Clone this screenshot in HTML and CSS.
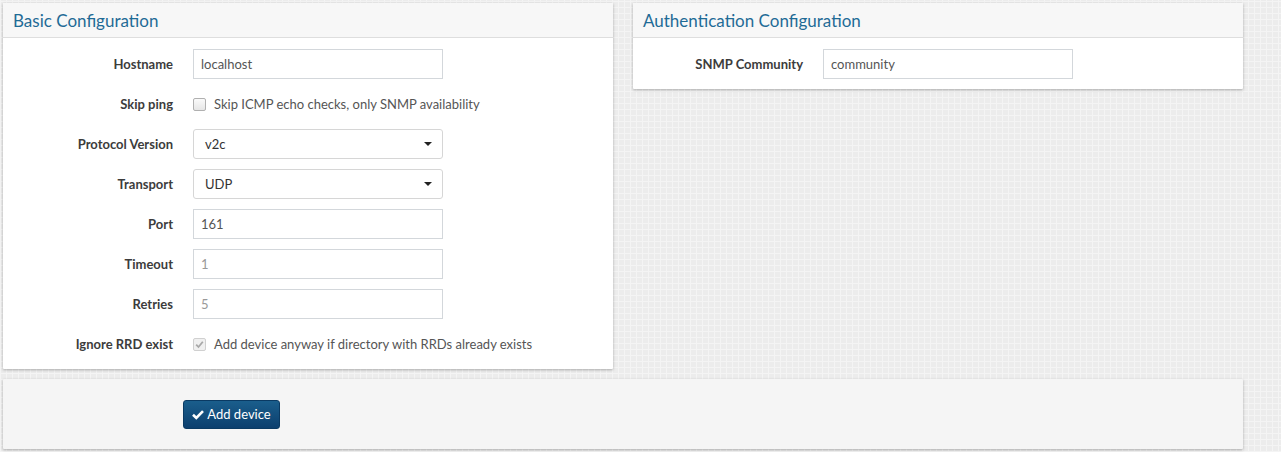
FILE: index.html
```html
<!DOCTYPE html>
<html>
<head>
<meta charset="utf-8">
<link rel="stylesheet" href="styles.css">
</head>
<body>
<div class="page">
  <div class="cols">
    <section class="panel panel-basic">
      <div class="panel-heading"><h3>Basic Configuration</h3></div>
      <div class="panel-body">
        <div class="row">
          <label class="lbl">Hostname</label>
          <div class="ctl"><input class="input" type="text" value="localhost"></div>
        </div>
        <div class="row row-check">
          <label class="lbl">Skip ping</label>
          <div class="ctl check"><span class="cb"></span><span class="cb-text">Skip ICMP echo checks, only SNMP availability</span></div>
        </div>
        <div class="row">
          <label class="lbl">Protocol Version</label>
          <div class="ctl"><div class="select"><span>v2c</span><span class="caret"></span></div></div>
        </div>
        <div class="row">
          <label class="lbl">Transport</label>
          <div class="ctl"><div class="select"><span>UDP</span><span class="caret"></span></div></div>
        </div>
        <div class="row">
          <label class="lbl">Port</label>
          <div class="ctl"><input class="input" type="text" value="161"></div>
        </div>
        <div class="row">
          <label class="lbl">Timeout</label>
          <div class="ctl"><input class="input" type="text" placeholder="1"></div>
        </div>
        <div class="row">
          <label class="lbl">Retries</label>
          <div class="ctl"><input class="input" type="text" placeholder="5"></div>
        </div>
        <div class="row row-check last">
          <label class="lbl">Ignore RRD exist</label>
          <div class="ctl check"><span class="cb cb-checked"><svg width="9" height="9" viewBox="0 0 9 9"><path d="M1.2 4.6 L3.5 7 L7.8 1.8" fill="none" stroke="#a8a8a8" stroke-width="1.8"/></svg></span><span class="cb-text">Add device anyway if directory with RRDs already exists</span></div>
        </div>
      </div>
    </section>
    <section class="panel panel-auth">
      <div class="panel-heading"><h3>Authentication Configuration</h3></div>
      <div class="panel-body">
        <div class="row last">
          <label class="lbl">SNMP Community</label>
          <div class="ctl"><input class="input" type="text" value="community"></div>
        </div>
      </div>
    </section>
  </div>
  <section class="panel panel-foot">
    <button class="btn" type="button"><svg width="12" height="11" viewBox="0 0 12 11"><path d="M1 5.8 L4.3 9 L11 2.2" fill="none" stroke="#fff" stroke-width="2.6"/></svg>Add device</button>
  </section>
</div>
</body>
</html>
```

FILE: styles.css
```css
html, body {
  margin: 0;
  padding: 0;
}
body {
  font-family: "Source Sans Pro", Lato, "Liberation Sans", sans-serif;
  font-size: 14px;
  color: #333;
  background-color: #ececec;
  background-image:
    repeating-linear-gradient(0deg, #f4f4f4 0, #f4f4f4 1px, transparent 1px, transparent 6px),
    repeating-linear-gradient(90deg, #f4f4f4 0, #f4f4f4 1px, transparent 1px, transparent 6px);
  height: 452px;
  overflow: hidden;
}
.page {
  padding: 3px 38px 0 3px;
}
.cols {
  display: flex;
  gap: 20px;
  align-items: flex-start;
}
.panel {
  background: #fff;
  box-shadow: 0 1px 3px rgba(0,0,0,0.28);
  border-radius: 1px;
}
.panel-basic, .panel-auth {
  width: 610px;
}
.panel-heading {
  background: #f7f7f7;
  border-bottom: 1px solid #dedede;
  height: 35px;
  box-sizing: border-box;
  padding: 0 10px;
  display: flex;
  align-items: center;
}
.panel-heading h3 {
  margin: 0;
  font-size: 17px;
  font-weight: 400;
  color: #1f6b96;
  line-height: 1;
}
.panel-body {
  padding: 11px 0 10px 0;
}
.row {
  display: flex;
  align-items: center;
  height: 30px;
  margin-bottom: 10px;
}
.row.last {
  margin-bottom: 0;
}
.lbl {
  width: 170px;
  text-align: right;
  font-weight: 700;
  font-size: 13px;
  color: #3c3c3c;
  box-sizing: border-box;
}
.ctl {
  margin-left: 20px;
}
.input, .select {
  width: 250px;
  height: 30px;
  box-sizing: border-box;
  border: 1px solid #d3d7db;
  border-radius: 0;
  padding: 0 7px;
  font-family: inherit;
  font-size: 13px;
  color: #555;
  background: #fff;
  outline: none;
}
.input::placeholder {
  color: #999;
}
.select {
  display: flex;
  align-items: center;
  justify-content: space-between;
  border-radius: 3px;
  border-color: #d6d6d6;
  padding: 0 10px 0 11px;
  color: #333;
}
.caret {
  width: 0;
  height: 0;
  border-left: 4px solid transparent;
  border-right: 4px solid transparent;
  border-top: 4px solid #222;
}
.check {
  display: flex;
  align-items: center;
}
.cb {
  width: 11px;
  height: 11px;
  border: 1px solid #b0b0b0;
  border-radius: 2px;
  background: linear-gradient(#fafafa, #e6e6e6);
  display: inline-flex;
  align-items: center;
  justify-content: center;
  margin-right: 8px;
}
.cb-checked {
  border-color: #d0d0d0;
  background: #f0f0f0;
}
.cb-text {
  font-size: 13px;
  color: #555;
}
.panel-foot {
  margin-top: 10px;
  width: 1240px;
  height: 70px;
  background: #f5f5f5;
  display: flex;
  align-items: center;
  padding-left: 180px;
  box-sizing: border-box;
}
.btn {
  height: 29px;
  width: 97px;
  border: 1px solid #0a3a63;
  border-radius: 3px;
  background: linear-gradient(#1a5e8c, #0c3f6e);
  color: #fff;
  font-family: inherit;
  font-size: 13px;
  display: inline-flex;
  align-items: center;
  justify-content: center;
  gap: 3px;
  padding: 0;
}
```
